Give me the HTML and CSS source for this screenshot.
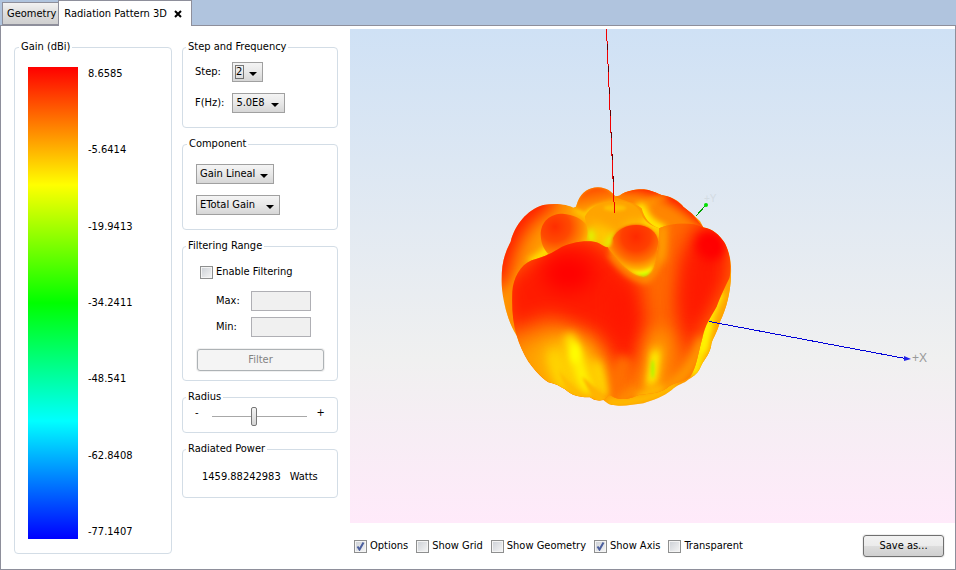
FILE: index.html
```html
<!DOCTYPE html>
<html lang="en">
<head>
  <meta charset="UTF-8">
  <title>Radiation Pattern 3D</title>
  <link rel="stylesheet" href="styles.css">
</head>
<body>
  <nav class="tabs">
    <button type="button" class="tab">Geometry</button>
    <div class="tab active">
      <span>Radiation Pattern 3D</span>
      <button type="button" class="close" aria-label="Close tab">
        <svg width="8" height="8" viewBox="0 0 8 8"><path d="M1 1L7 7M7 1L1 7" stroke="#000" stroke-width="2"/></svg>
      </button>
    </div>
  </nav>

  <main class="panel">
    <fieldset class="gain">
      <legend>Gain (dBi)</legend>
      <div class="scale"></div>
      <div class="scale-labels">
        <span>8.6585</span>
        <span>-5.6414</span>
        <span>-19.9413</span>
        <span>-34.2411</span>
        <span>-48.541</span>
        <span>-62.8408</span>
        <span>-77.1407</span>
      </div>
    </fieldset>

    <form class="controls">
      <fieldset class="group step">
        <legend>Step and Frequency</legend>
        <div class="row">
          <label for="step">Step:</label>
          <select id="step" class="focused"><option>2</option></select>
        </div>
        <div class="row">
          <label for="freq">F(Hz):</label>
          <select id="freq" class="freq"><option>5.0E8</option></select>
        </div>
      </fieldset>

      <fieldset class="group component">
        <legend>Component</legend>
        <select class="gain-type" aria-label="Gain type"><option>Gain Lineal</option></select>
        <select class="field-type" aria-label="Field"><option>ETotal Gain</option></select>
      </fieldset>

      <fieldset class="group filtering">
        <legend>Filtering Range</legend>
        <label class="check"><input type="checkbox"> Enable Filtering</label>
        <div class="range-row">
          <label for="max">Max:</label>
          <input id="max" type="text" disabled>
        </div>
        <div class="range-row">
          <label for="min">Min:</label>
          <input id="min" type="text" disabled>
        </div>
        <button type="button" class="btn" disabled>Filter</button>
      </fieldset>

      <fieldset class="group radius">
        <legend>Radius</legend>
        <span>-</span>
        <input type="range" min="0" max="100" value="44" aria-label="Radius">
        <span>+</span>
      </fieldset>

      <fieldset class="group power">
        <legend>Radiated Power</legend>
        <span class="value">1459.88242983</span>
        <span>Watts</span>
      </fieldset>
    </form>

    <section class="viewer">
      <div class="scene">
        <svg class="plot" viewBox="350 29 605 494" preserveAspectRatio="xMidYMid meet">
          <defs>
            <filter id="b4" filterUnits="userSpaceOnUse" x="-100" y="-100" width="950" height="920" color-interpolation-filters="sRGB"><feGaussianBlur stdDeviation="4"/></filter>
            <filter id="b8" filterUnits="userSpaceOnUse" x="-100" y="-100" width="950" height="920" color-interpolation-filters="sRGB"><feGaussianBlur stdDeviation="9"/></filter>
            <filter id="b14" filterUnits="userSpaceOnUse" x="-100" y="-100" width="950" height="920" color-interpolation-filters="sRGB"><feGaussianBlur stdDeviation="15"/></filter>
            <filter id="b26" filterUnits="userSpaceOnUse" x="-100" y="-100" width="950" height="920" color-interpolation-filters="sRGB"><feGaussianBlur stdDeviation="28"/></filter>
            <radialGradient id="leftLobe" gradientUnits="userSpaceOnUse" cx="195" cy="155" r="112">
              <stop offset="0" stop-color="#ff2e00"/>
              <stop offset=".4" stop-color="#ff4a00"/>
              <stop offset=".75" stop-color="#ff8a00"/>
              <stop offset="1" stop-color="#ffc800"/>
            </radialGradient>
            <radialGradient id="midLobe" gradientUnits="userSpaceOnUse" cx="438" cy="185" r="122">
              <stop offset="0" stop-color="#ff2a00"/>
              <stop offset=".35" stop-color="#ff4000"/>
              <stop offset=".6" stop-color="#ff7200"/>
              <stop offset=".8" stop-color="#ffb400"/>
              <stop offset=".9" stop-color="#f8ff00"/>
              <stop offset="1" stop-color="#90ff00"/>
            </radialGradient>
            <linearGradient id="topLobe" x1="0" y1="0" x2="0.3" y2="1">
              <stop offset="0" stop-color="#ff3c00"/>
              <stop offset="1" stop-color="#ffa800"/>
            </linearGradient>
            <clipPath id="outline">
              <path d="M250 98L258 95L263 80C275 50 300 36 325 37C350 38 365 50 376 64L388 62C410 46 440 42 462 43C490 46 510 62 530 63C550 68 572 82 580 95L605 115L630 138L640 157C665 160 690 180 705 205C720 235 725 265 723 300C722 350 710 400 690 440C680 480 665 490 663 515C655 545 640 555 632 575C622 600 605 605 590 618C575 628 560 630 545 645C520 665 490 675 460 685C430 690 390 695 370 690C355 690 350 682 340 675C325 680 310 675 300 667C270 668 245 662 225 643C210 635 195 625 175 622C150 605 130 580 115 560C100 535 88 510 80 482C60 450 40 395 35 330C33 280 40 240 62 200C75 150 110 105 160 90C200 83 235 90 250 98Z"/>
            </clipPath>
            <clipPath id="front">
              <path d="M80 482C68 440 65 400 67 350C70 310 90 270 125 256C160 245 180 238 205 222C235 203 280 196 312 200C335 204 345 220 352 216C400 280 430 302 460 306C490 300 495 270 505 220L508 160C540 146 600 138 640 157C665 160 690 180 705 205C722 240 726 280 718 310C700 345 690 370 680 395C660 430 645 450 637 490C625 530 620 580 600 606C575 625 550 620 530 640C500 660 460 655 440 662C420 672 395 675 380 670C370 668 364 660 358 660L345 672C325 680 310 675 300 667C270 668 245 662 225 643C210 635 195 625 175 622C120 580 95 530 80 482Z"/>
            </clipPath>
            <clipPath id="backRight">
              <path d="M376 66C410 44 440 42 462 43C500 46 510 62 530 63C560 72 580 95 605 115L640 157C580 138 540 152 505 160C480 150 462 130 455 100C430 80 400 78 376 66Z"/>
            </clipPath>
            <clipPath id="topRing">
              <path d="M284 125C300 92 340 78 378 78C418 78 448 92 458 125C470 145 490 155 510 160L505 225L352 216L300 200Z"/>
            </clipPath>
          </defs>

          <!-- lobes are drawn on a 750x720 grid, then scaled down -->
          <g transform="translate(490 175) scale(0.3333)">
            <g clip-path="url(#outline)">
              <rect width="750" height="720" fill="#ff9a00"/>
              <path d="M10 330C30 200 80 90 190 60" fill="none" stroke="#ff1000" stroke-width="80" filter="url(#b26)"/>
              <path d="M64 470C50 400 70 280 160 242" fill="none" stroke="#ff8c00" stroke-width="22" filter="url(#b8)"/>
              <path d="M120 264C155 245 165 232 185 215" fill="none" stroke="#ffe400" stroke-width="26" filter="url(#b8)"/>
              <path d="M240 104C265 120 290 140 310 160L350 215L420 150L380 90L280 90" fill="#ffc800" filter="url(#b8)"/>
              <path d="M257 98C262 55 300 36 325 37C350 38 366 50 378 70C345 74 305 85 285 112Z" fill="url(#topLobe)" filter="url(#b4)"/>

              <g clip-path="url(#backRight)">
                <rect x="360" y="30" width="300" height="140" fill="#ff8600"/>
                <path d="M390 30C480 20 570 60 660 150" fill="none" stroke="#ff2000" stroke-width="44" filter="url(#b14)"/>
                <path d="M470 120C460 90 480 72 530 66" fill="none" stroke="#ff9c00" stroke-width="14" filter="url(#b8)"/>
                <path d="M448 86C462 125 480 150 525 164" fill="none" stroke="#fff400" stroke-width="26" filter="url(#b8)"/>
              </g>

              <g clip-path="url(#topRing)">
                <rect x="270" y="70" width="260" height="170" fill="#ffa400"/>
                <path d="M276 128C320 150 320 180 300 215L352 222L382 175C350 150 320 150 276 128Z" fill="#ffc800" filter="url(#b14)"/>
                <ellipse cx="375" cy="99" rx="34" ry="10" fill="#ffc000" filter="url(#b4)"/>
                <path d="M400 165C430 140 480 140 515 170L512 235" fill="none" stroke="#ffc800" stroke-width="20" filter="url(#b14)"/>
                <path d="M460 135L515 165" fill="none" stroke="#ffec00" stroke-width="14" filter="url(#b8)"/>
                <path d="M345 216L375 180" fill="none" stroke="#d8ff00" stroke-width="16" filter="url(#b8)"/>
              </g>
              <ellipse cx="303" cy="184" rx="12" ry="24" fill="#dcff00" filter="url(#b8)"/>

              <path d="M152 180C152 140 180 116 218 116C250 118 275 132 288 148C296 170 292 192 285 205C250 205 215 222 182 242C165 230 153 210 152 180Z" fill="url(#leftLobe)"/>

              <!-- trailing side under the right lobe -->
              <path d="M730 260L640 420L600 620L680 620L740 400Z" fill="#ffa400"/>
              <path d="M690 350C665 410 645 450 635 520L610 600" fill="none" stroke="#fff000" stroke-width="28" filter="url(#b8)"/>
              <path d="M660 440L640 530" fill="none" stroke="#ffff00" stroke-width="14" filter="url(#b8)"/>
              <path d="M350 680C420 690 500 665 560 630" fill="none" stroke="#ffc800" stroke-width="18" filter="url(#b8)"/>

              <g clip-path="url(#front)">
                <rect width="750" height="720" fill="#ff6a00"/>
                <path d="M50 470L40 320L210 180L310 190L370 240L450 330L470 460L430 580L385 580L330 480L180 420Z" fill="#ff1c00" filter="url(#b26)"/>
                <ellipse cx="235" cy="295" rx="75" ry="55" fill="#ff0000" filter="url(#b26)"/>
                <path d="M390 340L400 470" fill="none" stroke="#ff1600" stroke-width="50" filter="url(#b26)"/>
                <path d="M640 130C700 150 740 260 700 340C660 420 620 480 590 540C560 480 555 400 570 320C580 240 590 180 640 130Z" fill="#ff1800" filter="url(#b26)"/>
                <ellipse cx="662" cy="212" rx="45" ry="45" fill="#ff0000" filter="url(#b14)"/>
                <path d="M610 240L600 400" fill="none" stroke="#ff1c00" stroke-width="40" filter="url(#b26)"/>
                <path d="M516 160C518 200 520 270 470 316C430 314 390 280 360 235" fill="none" stroke="#ff9c00" stroke-width="16" filter="url(#b8)"/>
                <path d="M520 140C515 180 518 220 512 260" fill="none" stroke="#ffa000" stroke-width="24" filter="url(#b14)"/>

                <path d="M60 520C130 490 180 460 250 480C310 510 345 550 355 700L100 700Z" fill="#ffa000" filter="url(#b26)"/>
                <path d="M165 530C195 500 240 490 275 520C315 550 330 600 345 670L220 650C190 620 165 580 165 530Z" fill="#ffd000" filter="url(#b26)"/>
                <path d="M235 480C262 530 262 560 280 615L300 650" fill="none" stroke="#ffff00" stroke-width="26" filter="url(#b14)"/>
                <ellipse cx="255" cy="535" rx="14" ry="30" fill="#ffff00" filter="url(#b8)"/>
                <path d="M185 530C195 560 195 600 225 640" fill="none" stroke="#ffdc00" stroke-width="20" filter="url(#b14)"/>
                <path d="M318 560L350 665" fill="none" stroke="#fff000" stroke-width="20" filter="url(#b14)"/>
                <path d="M276 605C290 640 310 665 330 690L350 672C325 650 300 620 276 605Z" fill="#ffb400" filter="url(#b4)"/>
                <path d="M207 585C215 615 225 635 245 655L280 668C255 640 225 610 207 585Z" fill="#ffbc00" filter="url(#b4)"/>

                <path d="M410 550C385 590 380 630 395 690" fill="none" stroke="#ff7000" stroke-width="46" filter="url(#b14)"/>
                <path d="M440 640L380 690" fill="none" stroke="#ff9600" stroke-width="24" filter="url(#b14)"/>
                <path d="M515 470C495 550 500 600 480 660" fill="none" stroke="#ffa400" stroke-width="60" filter="url(#b26)"/>
                <path d="M500 520C490 570 495 590 480 650" fill="none" stroke="#ffe400" stroke-width="26" filter="url(#b14)"/>
                <path d="M496 535C490 570 492 590 482 620" fill="none" stroke="#f8ff00" stroke-width="13" filter="url(#b8)"/>
                <ellipse cx="488" cy="582" rx="5" ry="28" fill="#80ff00" filter="url(#b4)" opacity=".6"/>
                <path d="M640 490C620 560 580 610 530 640L440 670" fill="none" stroke="#ff9c00" stroke-width="32" filter="url(#b14)"/>
                <path d="M520 638L440 667" fill="none" stroke="#ffc800" stroke-width="14" filter="url(#b8)"/>
              </g>

              <path d="M366 206C364 180 395 150 438 150C480 150 506 180 505 215C500 250 490 295 466 304C435 306 385 270 356 222Z" fill="url(#midLobe)" filter="url(#b4)"/>
              <path d="M369 190C382 162 410 150 438 150C475 150 502 172 505 200C500 240 480 260 440 262C410 260 380 235 369 190Z" fill="url(#midLobe)"/>
            </g>
          </g>

          <g fill="none" shape-rendering="crispEdges">
            <path d="M606.500 29L614.500 213" stroke="#f00000"/>
            <path d="M607.500 44L614.500 198" stroke="#600000" stroke-dasharray="6 16"/>
            <path d="M709 321.500L908 359" stroke="#0000d8"/>
            <path d="M696 216L706 205" stroke="#00a000"/>
          </g>
          <path d="M904 356L911 359L904 361Z" fill="#2020e8"/>
          <circle cx="706" cy="205" r="2" fill="#00e000"/>
          <text class="axis" x="912" y="362">+X</text>
          <text class="axis faint" x="704" y="202">+Y</text>
        </svg>
      </div>

      <div class="options">
        <label class="check"><input type="checkbox" checked> Options</label>
        <label class="check"><input type="checkbox"> Show Grid</label>
        <label class="check"><input type="checkbox"> Show Geometry</label>
        <label class="check"><input type="checkbox" checked> Show Axis</label>
        <label class="check"><input type="checkbox"> Transparent</label>
        <button type="button" class="btn save">Save as...</button>
      </div>
    </section>
  </main>
</body>
</html>
```
FILE: styles.css
```css
* {
  box-sizing: border-box;
}
body {
  margin: 0;
  height: 100vh;
  display: flex;
  flex-direction: column;
  background: #b0c4de;
  color: #000;
}
body, button, input, select {
  font-family: "DejaVu Sans Condensed", "Noto Sans", sans-serif;
  font-size: 11px;
  line-height: 14px;
}
.tabs {
  display: flex;
  align-items: flex-end;
  height: 25px;
  padding-left: 2px;
}
.tab {
  height: 23px;
  padding: 0 2px 0 4px;
  border: 1px solid #8e8f9b;
  border-right: none;
  background: linear-gradient(#f2f2f2, #ddd 50%, #cfcfcf);
}
.tab.active {
  display: flex;
  align-items: center;
  gap: 7px;
  height: 26px;
  margin-bottom: -1px;
  padding: 0 9px 0 5px;
  border-right: 1px solid #8e8f9b;
  border-bottom: none;
  background: #fff;
  position: relative;
}
.close {
  display: flex;
  padding: 0;
  border: none;
  background: none;
}
.panel {
  flex: 1;
  min-height: 0;
  display: flex;
  border: 1px solid #8e8f9b;
  background: #fff;
}
fieldset {
  min-width: 0;
  margin: 0;
  padding: 0 12px;
  border: 1px solid #d3dde6;
  border-radius: 4px;
}
legend {
  margin-left: -9px;
  padding: 0 2px;
}

/* colour scale */
.gain {
  display: flex;
  gap: 10px;
  width: 158px;
  margin: 14px 10px 15px 13px;
  padding: 13px 13px 14px;
}
.scale {
  width: 50px;
  background: linear-gradient(#f00, #ff0 25%, #0f0 50%, #0ff 75%, #00f);
}
.scale-labels {
  display: flex;
  flex-direction: column;
  justify-content: space-between;
}

/* controls column */
.controls {
  display: flex;
  flex-direction: column;
  gap: 9px;
  width: 156px;
  margin: 14px 12px 0 0;
}
.step {
  height: 88px;
  padding-top: 8px;
}
.row {
  display: flex;
  align-items: center;
  gap: 8px;
  margin-bottom: 11px;
}
.row label {
  min-width: 29px;
}
select {
  --arrow: url("data:image/svg+xml,%3Csvg xmlns='http://www.w3.org/2000/svg' width='8' height='4'%3E%3Cpath d='M0 0h8L4 4z'/%3E%3C/svg%3E") no-repeat right 5px top 9px;
  appearance: none;
  height: 20px;
  padding: 0 14px 0 3px;
  border: 1px solid #a0a0a0;
  border-radius: 0;
  color: #000;
  background: var(--arrow), linear-gradient(#f4f4f4, #e8e8e8 50%, #d6d6d6);
}
.focused {
  width: 31px;
  background: var(--arrow),
    url("data:image/svg+xml,%3Csvg xmlns='http://www.w3.org/2000/svg' width='9' height='14'%3E%3Crect x='.5' y='.5' width='8' height='13' fill='none' stroke='%23000' stroke-dasharray='1 1'/%3E%3C/svg%3E") no-repeat 2px 2px,
    linear-gradient(#f4f4f4, #e8e8e8 50%, #d6d6d6);
}
.freq {
  width: 53px;
}
.component {
  display: flex;
  flex-direction: column;
  align-items: flex-start;
  gap: 11px;
  height: 93px;
  padding: 13px 13px 0;
}
.gain-type {
  width: 78px;
}
.field-type {
  width: 84px;
}
.filtering {
  height: 142px;
  padding-top: 12px;
}
.check {
  display: flex;
  align-items: center;
  gap: 3px;
  white-space: nowrap;
}
.filtering .check {
  margin: 0 0 12px 5px;
}
input[type="checkbox"] {
  appearance: none;
  width: 13px;
  height: 13px;
  margin: 0;
  border: 1px solid #8e8f8f;
  background: linear-gradient(135deg, #cbcfd5, #f6f6f6);
  box-shadow: inset 0 0 0 1px #f4f4f4;
}
input[type="checkbox"]:checked {
  background: url("data:image/svg+xml,%3Csvg xmlns='http://www.w3.org/2000/svg' width='11' height='11'%3E%3Cpath d='M2.500 5.500L4.500 8.500L8.500 1.500' fill='none' stroke='%234b5f9e' stroke-width='2'/%3E%3C/svg%3E") no-repeat, linear-gradient(135deg, #cbcfd5, #f6f6f6);
}
.range-row {
  display: flex;
  align-items: center;
  margin: 0 0 6px 21px;
}
.range-row label {
  width: 35px;
}
input[type="text"] {
  width: 60px;
  height: 20px;
  border: 1px solid #afafb4;
  background: #f0f0f0;
}
.btn {
  height: 22px;
  padding: 0 13px;
  border: 1px solid #707070;
  border-radius: 3px;
  color: #000;
  background: linear-gradient(#f2f2f2, #ebebeb 50%, #ddd 50%, #cfcfcf);
  box-shadow: 0 0 0 1px #f0f0f0;
}
.btn:disabled {
  width: 127px;
  margin: 6px 0 0 2px;
  border-color: #adb2b5;
  color: #838383;
  background: #f4f4f4;
}
.radius {
  display: flex;
  height: 43px;
  padding-top: 2px;
}
.radius span:last-child {
  margin-left: 10px;
}
input[type="range"] {
  appearance: none;
  width: 95px;
  height: 19px;
  margin: 1px 0 0 13px;
  background: linear-gradient(#a8a8a8, #a8a8a8) no-repeat center / 100% 1px;
}
input[type="range"]::-webkit-slider-thumb {
  appearance: none;
  width: 6px;
  height: 19px;
  border: 1px solid #777;
  border-radius: 2px;
  background: linear-gradient(#f4f4f4, #d4d4d4);
}
.power {
  display: flex;
  gap: 9px;
  height: 56px;
  padding-top: 14px;
}
.value {
  margin-left: 7px;
}

/* 3D view */
.viewer {
  flex: 1;
  min-width: 0;
  display: flex;
  flex-direction: column;
  padding-top: 3px;
}
.scene {
  flex: 1;
  min-height: 0;
  background: linear-gradient(#cfe1f5, #f0f0f0 67%, #ffeafa);
}
.plot {
  display: block;
  width: 100%;
  height: 100%;
}
.axis {
  font-family: "Liberation Sans", sans-serif;
  font-size: 12px;
  fill: #999;
}
.faint {
  font-size: 10px;
  fill: #d3dbe2;
}
.options {
  display: flex;
  align-items: center;
  gap: 8px;
  height: 46px;
  padding: 0 11px 0 4px;
}
.save {
  width: 81px;
  margin-left: auto;
}
```
